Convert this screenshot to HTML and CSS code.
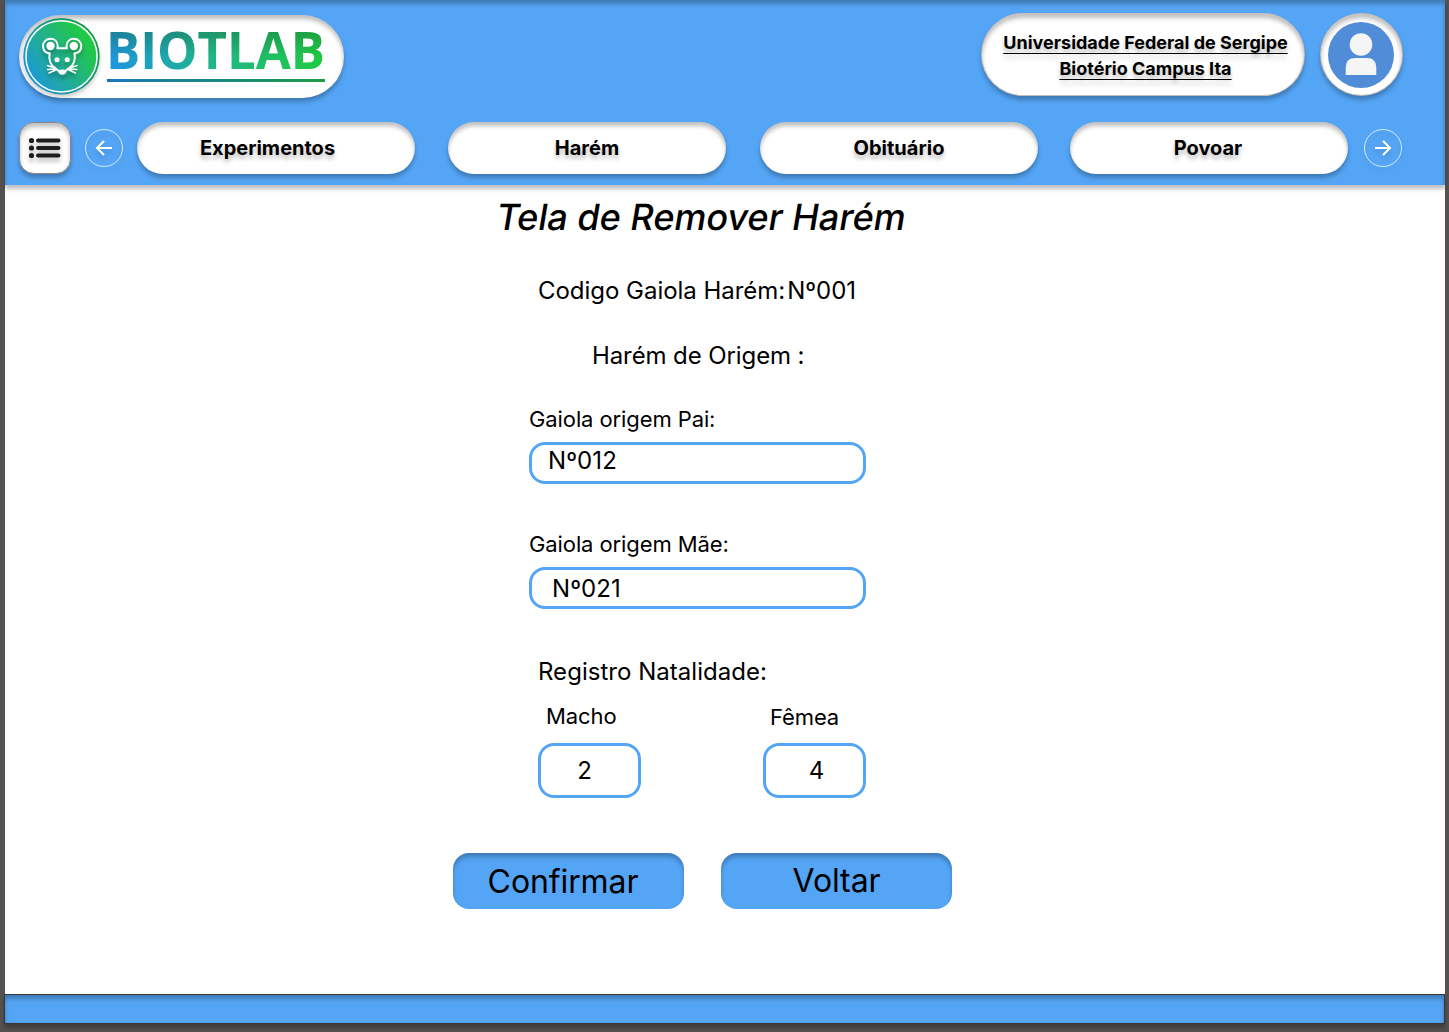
FILE: index.html
```html
<!DOCTYPE html>
<html lang="pt-BR">
<head>
<meta charset="utf-8">
<title>Biotlab - Remover Harém</title>
<link rel="stylesheet" href="styles.css">
</head>
<body>
<div class="page">
  <header class="header">
    <div class="topbar">
      <a class="logo">
        <svg width="325" height="83" viewBox="19 15 325 83">
          <defs>
            <linearGradient id="badge" x1="0.05" y1="0.85" x2="0.95" y2="0.2">
              <stop offset="0" stop-color="#1b97dc"/><stop offset="0.5" stop-color="#22b287"/><stop offset="0.9" stop-color="#20c944"/>
            </linearGradient>
            <linearGradient id="word" gradientUnits="userSpaceOnUse" x1="115" y1="75" x2="315" y2="30">
              <stop offset="0" stop-color="#1e96dd"/><stop offset="0.45" stop-color="#20b58c"/><stop offset="1" stop-color="#1ecb42"/>
            </linearGradient>
            <linearGradient id="wordShade" gradientUnits="userSpaceOnUse" x1="0" y1="32" x2="0" y2="58">
              <stop offset="0" stop-color="#1c5a3c" stop-opacity="0.38"/><stop offset="1" stop-color="#1c5a3c" stop-opacity="0"/>
            </linearGradient>
            <linearGradient id="rule" x1="0" x2="1" y1="0" y2="0">
              <stop offset="0" stop-color="#1a76bd"/><stop offset="1" stop-color="#1c9b46"/>
            </linearGradient>
            <linearGradient id="ring" x1="0" y1="0.8" x2="0.9" y2="0.2">
              <stop offset="0" stop-color="#1b95e0"/><stop offset="1" stop-color="#139b46"/>
            </linearGradient>
          </defs>
          <g class="badge-shadow">
            <circle cx="61.5" cy="56.3" r="38.2" fill="url(#ring)"/>
            <circle cx="61.5" cy="56.3" r="35.6" fill="url(#badge)" stroke="#fff" stroke-width="1.5"/>
          </g>
          <g class="mouse" fill="none" stroke="#fff" stroke-width="2" stroke-linecap="round">
            <path d="M57.500 48.300H66.800M49.600 53.500C48.800 59 50 64.500 54.500 67.500L58 70.500M74.600 53.500C75.400 59 74.200 64.500 69.700 67.500L66 70.500"/>
            <path d="M49.600 53.500C45.500 52.800 43 49.800 43 46C43 42 46.300 38.800 50.400 38.800C54.500 38.800 57.500 41.500 57.700 45.500V48.300M74.600 53.500C78.800 52.800 81.300 49.800 81.300 46C81.300 42 78 38.800 73.900 38.800C69.800 38.800 66.800 41.500 66.600 45.500V48.300"/>
            <path d="M47.500 65.500L54.500 68M47.500 69.500L54.500 69M49 73L55.500 70M77 65.500L70 68M77 69.500L70 69M75.500 73L69 70" stroke-width="1.500"/>
            <g fill="#fff" stroke="none">
              <circle cx="50.500" cy="46" r="4.200"/><circle cx="73.800" cy="46" r="4.200"/>
              <circle cx="57" cy="59.700" r="2.500"/><circle cx="67.200" cy="59.700" r="2.500"/>
              <path d="M58 70.500Q62.200 68.300 66.500 70.500Q66 74.800 62.200 74.800Q58.500 74.800 58 70.500Z"/>
            </g>
          </g>
          <g class="wordmark">
            <text x="106" y="69" textLength="219" lengthAdjust="spacingAndGlyphs" fill="url(#word)">BIOTLAB</text>
            <text x="106" y="69" textLength="219" lengthAdjust="spacingAndGlyphs" fill="url(#wordShade)" aria-hidden="true">BIOTLAB</text>
          </g>
          <rect x="107" y="79" width="218" height="3" fill="url(#rule)"/>
        </svg>
      </a>
      <div class="institution"><span>Universidade Federal de Sergipe</span><span>Biotério Campus Ita</span></div>
      <div class="avatar">
        <svg width="66" height="66" viewBox="0 0 66 66"><circle cx="33" cy="33" r="33" fill="#508cd7"/><circle cx="33" cy="22.500" r="11.300" fill="#f5f5f5"/><path d="M17.700 53V45.500Q17.700 36 27 36H39Q48.300 36 48.300 45.500V53Z" fill="#f5f5f5"/></svg>
      </div>
    </div>
    <nav class="nav">
      <div class="menu">
        <svg width="32" height="30" viewBox="0 0 32 30"><g stroke="#1e1c1c" stroke-width="4" stroke-linecap="round"><path d="M9 2.500H29.500M9 10H29.500M9 17.500H29.500"/></g><g fill="#1e1c1c"><circle cx="2.500" cy="2.500" r="2.600"/><circle cx="2.500" cy="10" r="2.600"/><circle cx="2.500" cy="17.500" r="2.600"/></g></svg>
      </div>
      <div class="arrow prev"><svg width="38" height="38" viewBox="0 0 38 38"><circle cx="19" cy="19" r="18.500"/><path d="M27 19H12M19 12L12 19L19 26"/></svg></div>
      <a class="tab t1">Experimentos</a>
      <a class="tab t2">Harém</a>
      <a class="tab t3">Obituário</a>
      <a class="tab t4">Povoar</a>
      <div class="arrow next"><svg width="38" height="38" viewBox="0 0 38 38"><circle cx="19" cy="19" r="18.500"/><path d="M11 19H26M19 12L26 19L19 26"/></svg></div>
    </nav>
  </header>
  <main class="main">
    <h1>Tela de Remover Harém</h1>
    <p class="code"><span>Codigo Gaiola Harém:</span><span>Nº001</span></p>
    <h2>Harém de Origem :</h2>
    <div class="field"><label>Gaiola origem Pai:</label><div class="box father">Nº012</div></div>
    <div class="field"><label>Gaiola origem Mãe:</label><div class="box mother">Nº021</div></div>
    <h3>Registro Natalidade:</h3>
    <div class="births">
      <div class="count male"><label>Macho</label><div class="num">2</div></div>
      <div class="count female"><label>Fêmea</label><div class="num">4</div></div>
    </div>
    <div class="actions"><div class="btn confirm">Confirmar</div><div class="btn back">Voltar</div></div>
  </main>
  <footer class="footer"></footer>
</div>
</body>
</html>
```
FILE: styles.css
```css
* { box-sizing: border-box; }
body { margin: 0; background: #55514f; font-family: Inter, "Liberation Sans", sans-serif; color: #000; }
.page { width: 1440px; height: 1032px; margin-left: 5px; display: flex; flex-direction: column; }
h1, h2, h3, p { margin: 0; font-weight: 400; }
svg { display: block; overflow: visible; }

.header {
  position: relative; z-index: 1; height: 185px; background: #54a5f5;
  box-shadow: inset 0 4px 4px rgba(0,0,0,.25), 0 4px 4px rgba(0,0,0,.25);
}
.topbar { display: flex; padding: 13px 0 0 14px; height: 122px; }
.logo {
  width: 325px; height: 83px; margin-top: 2px; border-radius: 42px; background: #fff;
  box-shadow: inset 0 4px 4px rgba(0,0,0,.25), 0 4px 4px rgba(0,0,0,.25);
}
.badge-shadow { filter: drop-shadow(0 3px 2px rgba(0,0,0,.2)); }
.mouse { filter: drop-shadow(0 4px 2px rgba(0,0,0,.25)); }
.wordmark { font: 700 51.500px "Open Sans", sans-serif; }
.institution {
  width: 324px; height: 83px; margin-left: 637px; border-radius: 42px; background: #fff;
  box-shadow: inset 0 4px 4px rgba(0,0,0,.25), 0 4px 4px rgba(0,0,0,.25);
  border: 1px solid rgba(145,135,130,.55); padding: 16px 0 0 5px;
  display: flex; flex-direction: column; align-items: center;
  font-size: 18px; font-weight: 700; line-height: 26px; text-shadow: 0 4px 4px rgba(0,0,0,.25);
}
.institution span { text-decoration: underline; text-decoration-thickness: 1px; text-underline-offset: 4px; }
.avatar {
  width: 83px; height: 83px; margin-left: 15px; border-radius: 50%; background: #fff; padding: 8px 7px;
  border: 1px solid rgba(145,135,130,.55);
  box-shadow: inset 0 4px 4px rgba(0,0,0,.25), 0 4px 4px rgba(0,0,0,.25);
}
.nav { display: flex; padding-left: 14px; height: 52px; align-items: center; }
.menu {
  width: 52px; height: 52px; border-radius: 15px; background: #fff; border: 1px solid #8c8784; padding: 15px 9px;
  box-shadow: inset 0 4px 4px rgba(0,0,0,.25), 0 4px 4px rgba(0,0,0,.25);
}
.menu svg { filter: drop-shadow(0 4px 2px rgba(0,0,0,.25)); }
.arrow svg { fill: none; stroke: #fff; stroke-width: 2; filter: drop-shadow(0 4px 2px rgba(0,0,0,.12)); }
.arrow circle { stroke-width: 1; stroke: rgba(255,255,255,.75); }
.prev { margin-left: 14px; }
.next { margin-left: 16px; }
.tab {
  width: 278px; height: 52px; border-radius: 26px; background: #fff; text-align: center;
  font-size: 20px; font-weight: 700; line-height: 52px; text-shadow: 0 4px 4px rgba(0,0,0,.25);
  box-shadow: inset 0 4px 4px rgba(0,0,0,.25), 0 4px 4px rgba(0,0,0,.25);
}
.t1 { margin-left: 14px; padding-right: 17px; }
.t2 { margin-left: 33px; }
.t3 { margin-left: 34px; }
.t4 { margin-left: 32px; padding-right: 2px; }

.main { height: 809px; flex: none; background: #fff; display: flex; flex-direction: column; align-items: flex-start; }
h1 { margin: 8px 0 0 492px; font-size: 36px; line-height: 48px; font-weight: 500; transform: skewX(-9.4deg); white-space: nowrap; }
.code { margin: 35px 0 0 533px; font-size: 24px; line-height: 30px; letter-spacing: -.03px; display: flex; gap: 2px; white-space: nowrap; }
h2 { margin: 35px 0 0 587px; font-size: 24px; line-height: 30px; letter-spacing: -.1px; }
.field { margin: 35px 0 0 524px; }
.field + .field { margin-top: 47px; }
.field label, .count label { display: block; font-size: 22px; line-height: 26px; letter-spacing: -.1px; }
.box { width: 337px; height: 42px; margin-top: 10px; border: 3px solid #54a5f5; border-radius: 16px; font-size: 24px; }
.father { padding-left: 16px; line-height: 31px; letter-spacing: .1px; }
.mother { padding-left: 20px; line-height: 37px; letter-spacing: .1px; }
h3 { margin: 48px 0 0 533px; font-size: 24px; line-height: 30px; letter-spacing: .03px; }
.births { display: flex; margin: 16px 0 0 533px; gap: 122px; }
.count { width: 103px; }
.male label { padding-left: 8px; }
.female label { position: relative; top: 1px; padding-left: 7px; }
.num { height: 55px; margin-top: 14px; border: 3px solid #54a5f5; border-radius: 16px; font-size: 24px; line-height: 49px; text-align: center; }
.male .num { padding-right: 10px; }
.female .num { padding-left: 4px; }
.actions { display: flex; gap: 37px; margin: 55px 0 0 448px; }
.btn {
  width: 231px; height: 56px; border-radius: 16px; background: #54a5f5; font-size: 32px; line-height: 57px; text-align: center;
  letter-spacing: -.1px; box-shadow: inset 0 4px 4px rgba(0,0,0,.25);
}
.confirm { padding-right: 11px; }
.back { line-height: 55px; }
.footer {
  width: 1441px; height: 30px; margin-left: -1px; flex: none; background: #54a5f5; border: 1px solid #383533;
  box-shadow: inset 0 4px 4px rgba(0,0,0,.25), 0 4px 4px rgba(0,0,0,.25);
}
```
